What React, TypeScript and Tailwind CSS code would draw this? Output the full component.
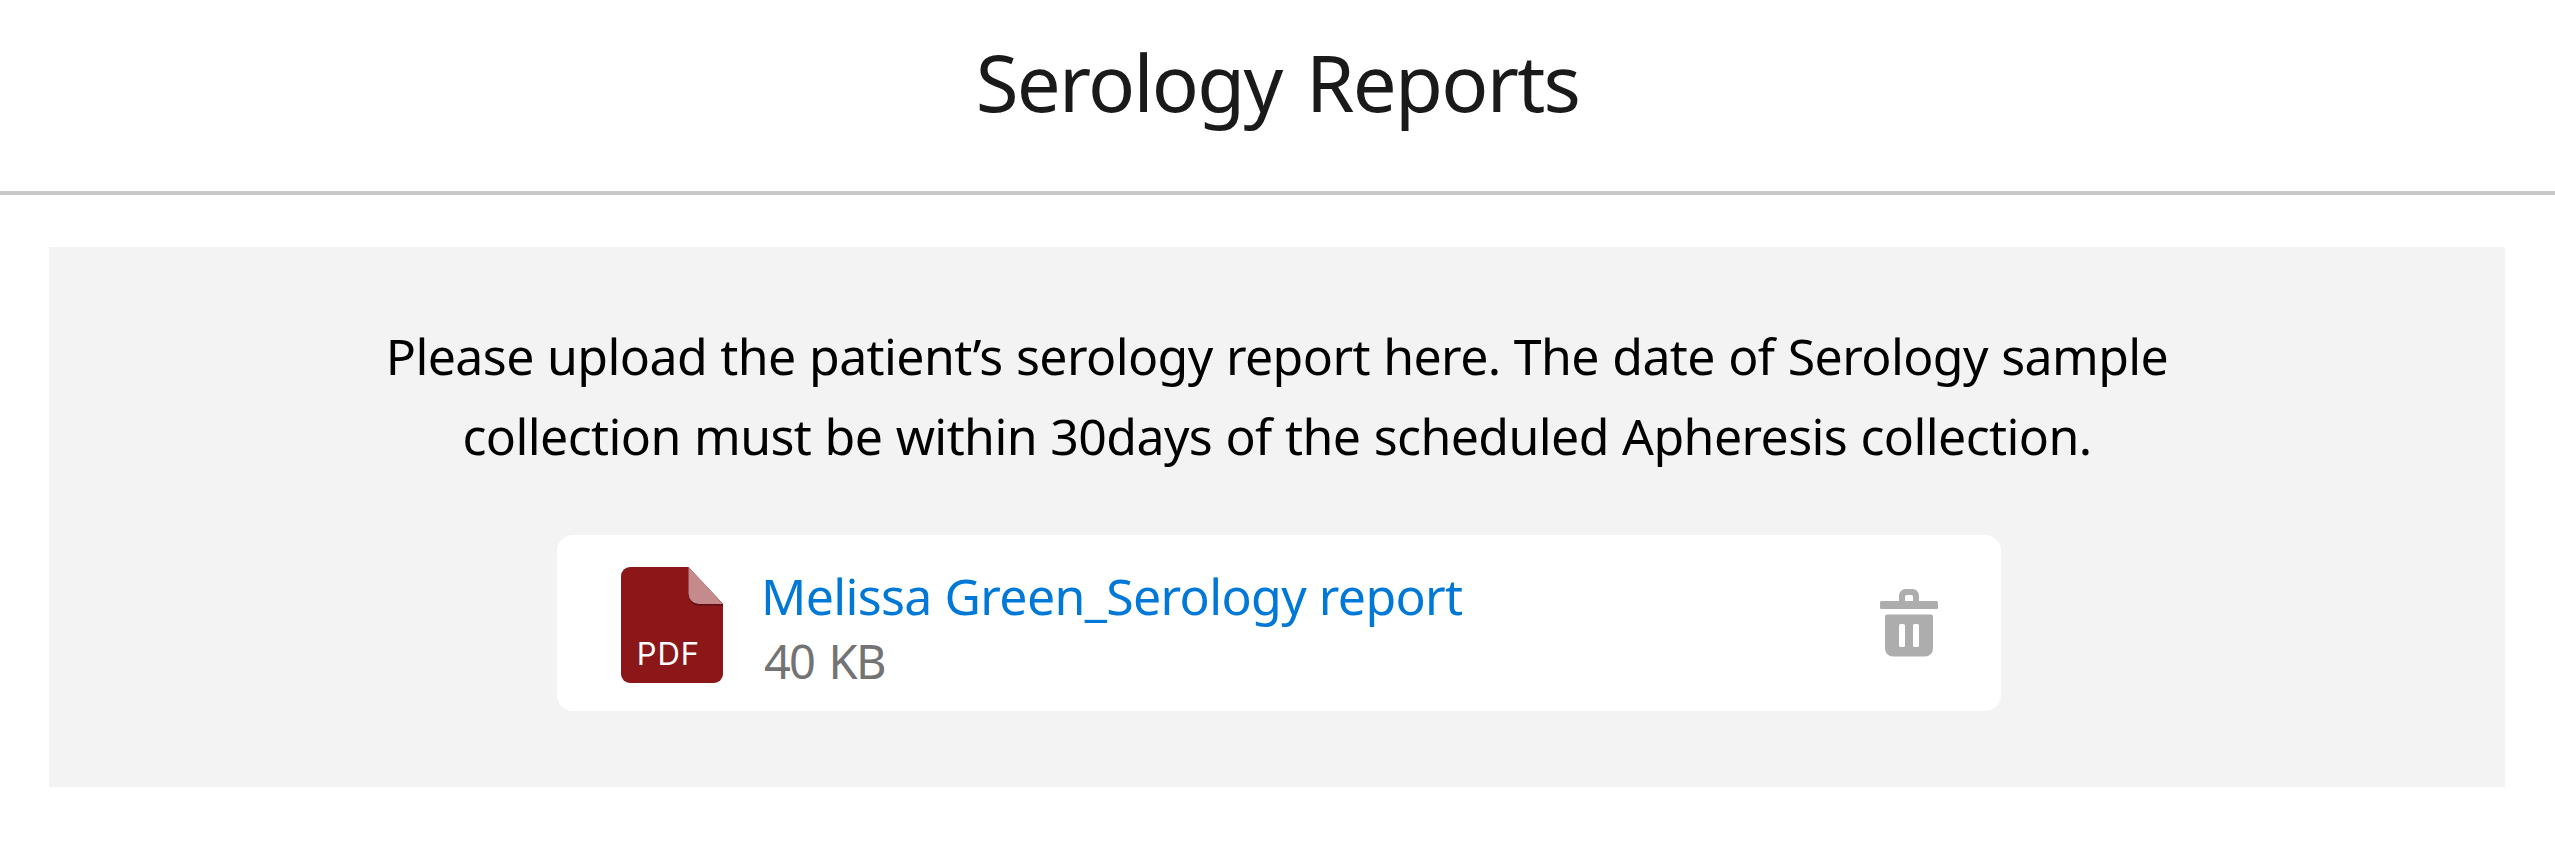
function PdfIcon() {
  return (
    <svg width="102" height="116" viewBox="0 0 102 116" className="shrink-0" role="img" aria-label="PDF file">
      <path d="M9 0H67.5L102 37V107a9 9 0 0 1-9 9H9a9 9 0 0 1-9-9V9a9 9 0 0 1 9-9Z" fill="#8b1719" />
      <path d="M67.5 1V28a10.5 10.5 0 0 0 10.5 10.5H102V37Z" fill="#5f0c12" />
      <path d="M67.5 0V26.500a10.500 10.500 0 0 0 10.500 10.500H102Z" fill="#c58a8c" />
      <text x="15.800" y="97.500" fontSize="31" letterSpacing="0.9" fill="#fff" className="font-['Inter',sans-serif] font-[370]">
        PDF
      </text>
    </svg>
  );
}

function TrashIcon() {
  return (
    <svg width="58" height="68" viewBox="0 0 58 68" className="block" fill="#adadad">
      <path
        fillRule="evenodd"
        d="M19 13V6.500A6.500 6.500 0 0 1 25.500 0H32.500A6.500 6.500 0 0 1 39 6.500V13ZM25 12H33V7.500A1.500 1.500 0 0 0 31.500 6H26.500A1.500 1.500 0 0 0 25 7.500Z"
      />
      <rect x="0" y="12" width="58" height="8" rx="1.500" />
      <path
        fillRule="evenodd"
        d="M7 25.500H51A2 2 0 0 1 53 27.500V59.500A8 8 0 0 1 45 67.500H13A8 8 0 0 1 5 59.500V27.500A2 2 0 0 1 7 25.500ZM20.500 35A1.500 1.500 0 0 0 19 36.500V56.500A1.500 1.500 0 0 0 20.500 58H23.500A1.500 1.500 0 0 0 25 56.500V36.500A1.500 1.500 0 0 0 23.500 35ZM34.500 35A1.500 1.500 0 0 0 33 36.500V56.500A1.500 1.500 0 0 0 34.500 58H37.500A1.500 1.500 0 0 0 39 56.500V36.500A1.500 1.500 0 0 0 37.500 35Z"
      />
    </svg>
  );
}

export default function App() {
  return (
    <main className="h-[849px] w-full overflow-hidden bg-white font-['Noto_Sans',sans-serif]">
      <header className="flex h-[195px] items-start justify-center border-b-4 border-[#c8c8c8] pt-[29px]">
        <h1 className="text-[78px] leading-[106px] font-[380] tracking-[-1.75px] text-[#1a1a1a] [word-spacing:6px]">
          Serology Reports
        </h1>
      </header>
      <section className="mt-[52px] mr-[50px] ml-[49px] flex h-[540px] flex-col items-center bg-[#f3f3f3] pt-[69px]">
        <p className="text-center text-[50px] leading-[80px] tracking-[-0.6px] whitespace-nowrap text-black [word-spacing:0.9px]">
          <span className="block">Please upload the patient’s serology report here. The date of Serology sample</span>
          <span className="block">collection must be within 30days of the scheduled Apheresis collection.</span>
        </p>
        <div className="mt-[59px] ml-1 flex h-[176px] w-[1444px] items-start rounded-2xl bg-white pr-[63px] pl-16">
          <div className="mt-8 shrink-0">
            <PdfIcon />
          </div>
          <div className="ml-[38px] flex-1 pt-7 whitespace-nowrap">
            <a className="block text-[50px] leading-[66px] tracking-[-0.65px] text-[#0078d7] [word-spacing:0.5px]">
              Melissa Green_Serology report
            </a>
            <span className="block pl-[3px] text-[47px] leading-[64px] tracking-[-1.8px] text-[#737373] [word-spacing:4px]">
              40 KB
            </span>
          </div>
          <button type="button" aria-label="Delete file" className="mt-[54px] shrink-0">
            <TrashIcon />
          </button>
        </div>
      </section>
    </main>
  );
}
